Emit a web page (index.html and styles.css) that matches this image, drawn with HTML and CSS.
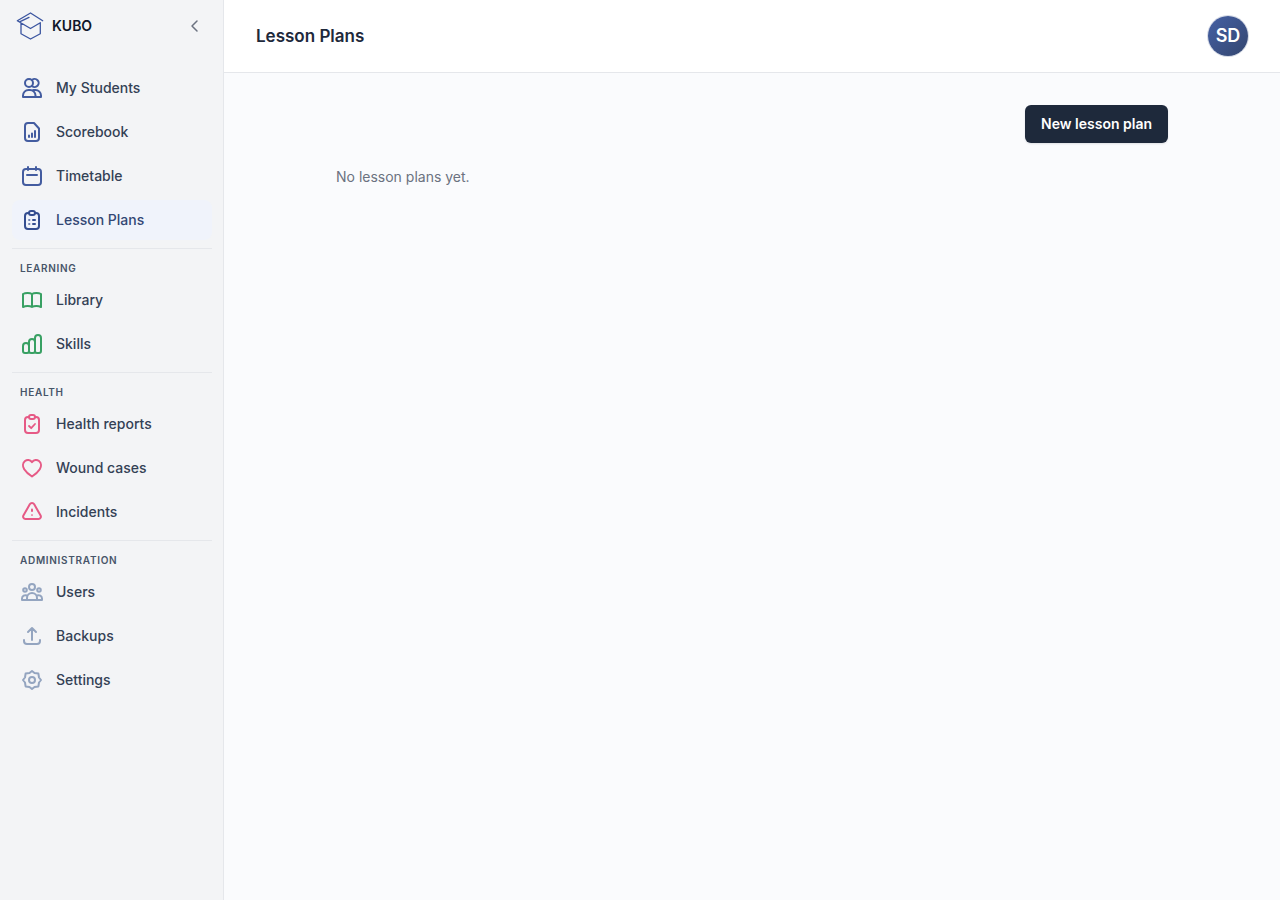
FILE: index.html
```
<!DOCTYPE html>
<html lang="en">
<head>
<meta charset="utf-8">
<meta name="viewport" content="width=device-width, initial-scale=1">
<title>Lesson Plans - KUBO</title>
<link rel="stylesheet" href="styles.css">
</head>
<body>
<div class="app">
  <aside class="sidebar">
    <div class="brand">
      <a class="brand-link" href="#">
        <svg class="logo" viewBox="0 0 28 28" aria-hidden="true"><path d="M26.7 8.7 14.5 1 1.3 8.700l13.200 7.800 9.800-5.800v11L14.500 27 5 21.700V11M3.600 9.900 13 5.400"/></svg>
        <span>KUBO</span>
      </a>
      <button class="collapse" type="button" aria-label="Collapse sidebar">
        <svg viewBox="0 0 16 16" aria-hidden="true"><path d="M10 3 5 8l5 5"/></svg>
      </button>
    </div>
    <nav class="nav" aria-label="Main">
      <div class="group blue">
        <a class="item" href="#"><svg class="icon" viewBox="0 0 24 24" aria-hidden="true"><circle cx="9" cy="7" r="4"/><path d="M12 4A4 4 0 1 1 12 10M3 21v-1.500A5.500 5.500 0 0 1 8.500 14H10a5.500 5.500 0 0 1 5.500 5.500V21zM13.500 14h2A5.500 5.500 0 0 1 21 19.500V21h-5.500"/></svg>My Students</a>
        <a class="item" href="#"><svg class="icon" viewBox="0 0 24 24" aria-hidden="true"><path d="M14 3H8a3 3 0 0 0-3 3v12a3 3 0 0 0 3 3h8a3 3 0 0 0 3-3V8.500zM9 15.500V17M12 13.500V17M15 11v6"/></svg>Scorebook</a>
        <a class="item" href="#"><svg class="icon" viewBox="0 0 24 24" aria-hidden="true"><rect x="3" y="5" width="18" height="16" rx="3"/><path d="M8 3v3M16 3v3M7 11h10"/></svg>Timetable</a>
        <a class="item active" href="#" aria-current="page"><svg class="icon" viewBox="0 0 24 24" aria-hidden="true"><path d="M9 5H8a3 3 0 0 0-3 3v10a3 3 0 0 0 3 3h8a3 3 0 0 0 3-3V8a3 3 0 0 0-3-3h-1"/><rect x="9" y="3" width="6" height="4" rx="2"/><path d="M13 12h2M13 16h2"/><path class="faint" d="M9 12h.5M9 16h.5"/></svg>Lesson Plans</a>
      </div>
      <div class="group green">
        <h2 class="heading">Learning</h2>
        <a class="item" href="#"><svg class="icon" viewBox="0 0 24 24" aria-hidden="true"><path d="M12 6C10 4.700 5.500 4.500 3 6v13c2.500-1.300 7-1.200 9 0 2-1.200 6.500-1.300 9 0V6c-2.500-1.500-7-1.300-9 0zv13"/></svg>Library</a>
        <a class="item" href="#"><svg class="icon" viewBox="0 0 24 24" aria-hidden="true"><path d="M9 19v-5a3 3 0 0 0-6 0v5a2 2 0 0 0 2 2h2a2 2 0 0 0 2-2zM9 19v-9a3 3 0 0 1 6 0v9a2 2 0 0 1-2 2h-2a2 2 0 0 1-2-2zM15 19V6a3 3 0 0 1 6 0v13a2 2 0 0 1-2 2h-2a2 2 0 0 1-2-2z"/></svg>Skills</a>
      </div>
      <div class="group pink">
        <h2 class="heading">Health</h2>
        <a class="item" href="#"><svg class="icon" viewBox="0 0 24 24" aria-hidden="true"><path d="M9 5H8a3 3 0 0 0-3 3v10a3 3 0 0 0 3 3h8a3 3 0 0 0 3-3V8a3 3 0 0 0-3-3h-1"/><rect x="9" y="3" width="6" height="4" rx="2"/><path class="check" d="m9 14 2.200 2.200L15 12"/></svg>Health reports</a>
        <a class="item" href="#"><svg class="icon" viewBox="0 0 24 24" aria-hidden="true"><path d="M12 6.200C10 3.500 7 3.500 5 5c-2.500 2-2.500 5.500-.8 8.200C6 16 9 18.500 12 20.500c3-2 6-4.500 7.800-7.300C21.500 10.500 21.500 7 19 5c-2-1.500-5-1.500-7 1.200z"/></svg>Wound cases</a>
        <a class="item" href="#"><svg class="icon" viewBox="0 0 24 24" aria-hidden="true"><path d="M9.800 4.300 3.400 15.600A2.300 2.300 0 0 0 5.400 19h13.200a2.300 2.300 0 0 0 2-3.400L14.200 4.300a2.500 2.500 0 0 0-4.400 0z"/><path d="M12 9.500V11"/><path class="faint" d="M12 15v.2"/></svg>Incidents</a>
      </div>
      <div class="group gray">
        <h2 class="heading">Administration</h2>
        <a class="item" href="#"><svg class="icon" viewBox="0 0 24 24" aria-hidden="true"><circle cx="12" cy="7" r="3"/><circle cx="5" cy="10" r="1.800"/><circle cx="19" cy="10" r="1.800"/><path d="M7 20v-2a5 5 0 0 1 10 0v2zM7 20H2v-1.500A3.500 3.500 0 0 1 7 15.500M17 20h5v-1.500A3.500 3.500 0 0 0 17 15.500"/></svg>Users</a>
        <a class="item" href="#"><svg class="icon" viewBox="0 0 24 24" aria-hidden="true"><path d="M12 16V4M8 8l4-4 4 4M4 16v1a3 3 0 0 0 3 3h10a3 3 0 0 0 3-3v-1"/></svg>Backups</a>
        <a class="item" href="#"><svg class="icon" viewBox="0 0 24 24" aria-hidden="true"><path d="M9.500 5 12 3l2.500 2 3.900.6.600 3.900 2 2.500-2 2.500-.6 3.900-3.900.6-2.500 2-2.500-2-3.900-.6-.6-3.900-2-2.500 2-2.500.6-3.900z"/><circle cx="12" cy="12" r="3"/></svg>Settings</a>
      </div>
    </nav>
  </aside>
  <div class="page">
    <header class="topbar">
      <h1 class="title">Lesson Plans</h1>
      <button class="avatar" type="button" aria-label="Account menu">SD</button>
    </header>
    <main class="content">
      <div class="actions"><button class="primary" type="button">New lesson plan</button></div>
      <p class="empty">No lesson plans yet.</p>
    </main>
  </div>
</div>
</body>
</html>
```
FILE: styles.css
```
* { box-sizing: border-box; }
body {
  margin: 0;
  font-family: Inter, "Liberation Sans", sans-serif;
  font-size: 14px;
  line-height: 20px;
  color: #1e293b;
  background: #fafbfd;
}
button { font: inherit; border: 0; cursor: pointer; }
h1, h2, p { margin: 0; }
svg { fill: none; stroke: currentColor; stroke-linecap: round; stroke-linejoin: round; }
.app { display: flex; min-height: 100vh; }
.sidebar {
  width: 224px;
  flex: none;
  background: #f3f4f6;
  border-right: 1px solid #e5e7eb;
}
.brand {
  display: flex;
  align-items: center;
  justify-content: space-between;
  height: 52px;
  padding: 0 16px;
}
.brand-link {
  display: flex;
  align-items: center;
  gap: 8px;
  color: #0f172a;
  font-weight: 600;
  text-decoration: none;
}
.logo { width: 28px; height: 28px; color: #3b55a0; stroke-width: 1.3; }
.collapse {
  display: flex;
  padding: 4px;
  background: none;
  color: #6b7280;
}
.collapse svg { width: 16px; height: 16px; stroke-width: 1.5; }
.nav { padding: 16px 11px 16px 12px; }
.group { display: flex; flex-direction: column; gap: 4px; }
.group + .group { margin-top: 8px; border-top: 1px solid #e5e7eb; }
.heading {
  margin-bottom: -4px;
  padding: 11px 8px 4px;
  font-size: 10px;
  line-height: 16px;
  font-weight: 600;
  letter-spacing: 0.07em;
  text-transform: uppercase;
  color: #475569;
}
.item {
  display: flex;
  align-items: center;
  gap: 12px;
  height: 40px;
  padding: 0 8px;
  border-radius: 8px;
  color: #334155;
  font-weight: 500;
  text-decoration: none;
}
.active { background: #f0f3fb; color: #334774; }
.icon { width: 24px; height: 24px; flex: none; stroke-width: 2; }
.check { stroke-width: 1.8; }
.faint { stroke-width: 1.8; opacity: 0.7; }
.blue .icon { color: #435ca0; }
.blue .active .icon { color: #344d90; }
.green .icon { color: #38a063; }
.pink .icon { color: #e65a86; }
.gray .icon { color: #94a5c0; }
.page { flex: 1; min-width: 0; }
.topbar {
  display: flex;
  align-items: center;
  justify-content: space-between;
  padding: 16px 32px;
  background: #fff;
  border-bottom: 1px solid #e5e7eb;
}
.title { font-size: 17px; line-height: 28px; font-weight: 600; }
.avatar {
  width: 40px;
  height: 40px;
  padding: 0;
  border-radius: 50%;
  background: linear-gradient(135deg, #4560a4, #34466f);
  box-shadow: 0 0 0 1px #d5dae6;
  color: #fff;
  font-size: 18px;
  font-weight: 600;
}
.content {
  max-width: 896px;
  margin: 0 auto;
  padding: 32px;
}
.actions { display: flex; justify-content: flex-end; margin-bottom: 24px; }
.primary {
  padding: 9px 16px;
  border-radius: 6px;
  background: #1e293b;
  box-shadow: 0 1px 2px rgba(15, 23, 42, 0.12);
  color: #fff;
  font-weight: 600;
}
.empty { color: #6b7280; }
```
